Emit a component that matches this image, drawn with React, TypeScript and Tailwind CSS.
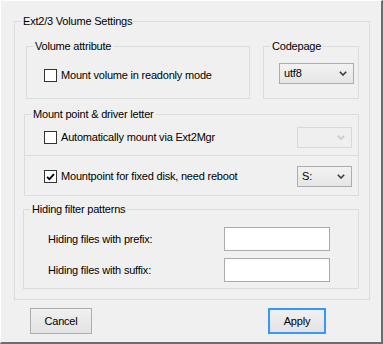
import React from "react";

function Chevron({ disabled }: { disabled?: boolean }) {
  return (
    <svg width="8" height="5" viewBox="0 0 8 5" className="shrink-0">
      <path
        d="M0.8 0.8 L4 4 L7.2 0.8"
        fill="none"
        stroke={disabled ? "#c8c8c8" : "#3c3c3c"}
        strokeWidth="1.6"
      />
    </svg>
  );
}

function Combo({ value, disabled, width }: { value?: string; disabled?: boolean; width: string }) {
  return (
    <div
      className={`flex h-[21px] shrink-0 items-center justify-between border pl-[4px] pr-[6px] ${width} ${
        disabled
          ? "border-[#d9d9d9] bg-[#efefef]"
          : "border-[#adadad] bg-linear-to-b from-[#f2f2f2] to-[#e6e6e6]"
      }`}
    >
      <span>{value}</span>
      <Chevron disabled={disabled} />
    </div>
  );
}

function Check({ checked, label }: { checked?: boolean; label: string }) {
  return (
    <label className="flex items-center gap-[4px]">
      <span className="flex h-[13px] w-[13px] shrink-0 items-center justify-center border border-[#333333] bg-white">
        {checked && (
          <svg width="9" height="8" viewBox="0 0 9 8">
            <path d="M1 3.8 L3.4 6.2 L8 1.2" fill="none" stroke="#000" strokeWidth="1.8" />
          </svg>
        )}
      </span>
      <span>{label}</span>
    </label>
  );
}

const Legend = ({ children }: { children: React.ReactNode }) => (
  <legend className="ml-[6px] px-[2px] leading-[14px]">{children}</legend>
);

export default function App() {
  return (
    <div className="h-[344px] w-[383px] border-t border-l border-r-2 border-b-2 border-t-white border-l-white border-r-[#6d6d6d] border-b-[#6d6d6d] bg-[#f0f0f0] pt-[13px] pr-[11px] pl-[13px] font-['Liberation_Sans',Arial,sans-serif] text-[11px] tracking-[-0.2px] text-black">
      <fieldset className="border border-[#dcdcdc] pb-[10px]">
        <Legend>Ext2/3 Volume Settings</Legend>

        <div className="mt-[11px] mr-[10px] ml-[11px] flex gap-[13px]">
          <fieldset className="flex-1 border border-[#dcdcdc]">
            <Legend>Volume attribute</Legend>
            <div className="pt-[14px] pl-[17px]">
              <Check label="Mount volume in readonly mode" />
            </div>
          </fieldset>
          <fieldset className="w-[96px] border border-[#dcdcdc]">
            <Legend>Codepage</Legend>
            <div className="pt-[10px] pb-[14px] pl-[15px]">
              <Combo value="utf8" width="w-[75px]" />
            </div>
          </fieldset>
        </div>

        <fieldset className="mt-[8px] mr-[10px] ml-[9px] border border-[#dcdcdc]">
          <Legend>Mount point &amp; driver letter</Legend>
          <div className="flex items-center justify-between pt-[6px] pr-[6px] pb-[7px] pl-[19px]">
            <Check label="Automatically mount via Ext2Mgr" />
            <Combo disabled width="w-[55px]" />
          </div>
          <div className="border-t border-[#dcdcdc]" />
          <div className="flex items-center justify-between pt-[10px] pr-[6px] pb-[8px] pl-[19px]">
            <Check checked label="Mountpoint for fixed disk, need reboot" />
            <Combo value="S:" width="w-[55px]" />
          </div>
        </fieldset>

        <fieldset className="mt-[6px] mr-[10px] ml-[8px] border border-[#dcdcdc]">
          <Legend>Hiding filter patterns</Legend>
          <div className="flex flex-col gap-[7px] pt-[11px] pb-[6px]">
            <div className="flex items-center justify-between pr-[28px] pl-[24px]">
              <span>Hiding files with prefix:</span>
              <input className="h-[24px] w-[106px] border border-[#ababab] bg-white outline-none" />
            </div>
            <div className="flex items-center justify-between pr-[28px] pl-[24px]">
              <span>Hiding files with suffix:</span>
              <input className="h-[24px] w-[106px] border border-[#ababab] bg-white outline-none" />
            </div>
          </div>
        </fieldset>
      </fieldset>

      <div className="mt-[8px] flex justify-between">
        <button className="ml-[16px] h-[26px] w-[62px] border border-[#adadad] bg-linear-to-b from-[#f0f0f0] to-[#e3e3e3]">
          Cancel
        </button>
        <button className="mr-[44px] h-[26px] w-[58px] border-2 border-[#3399ff] bg-linear-to-b from-[#f0f0f0] to-[#e3e3e3]">
          Apply
        </button>
      </div>
    </div>
  );
}
